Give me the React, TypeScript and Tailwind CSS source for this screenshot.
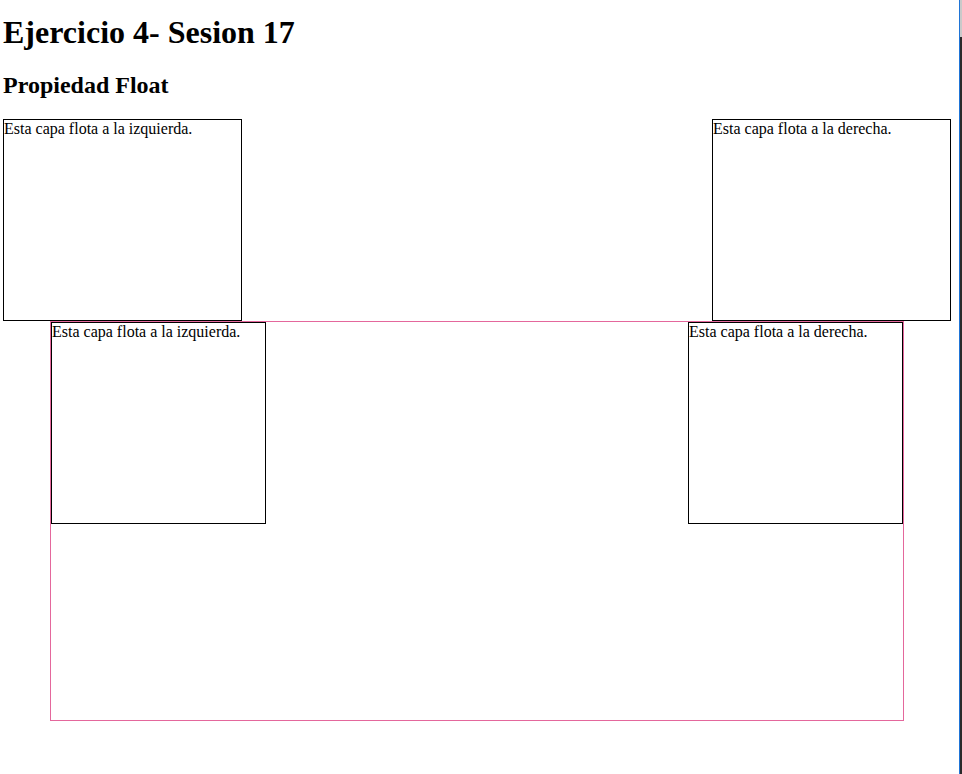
// Ejercicio 4 - Sesion 17: float demo
const serif = { fontFamily: '"Liberation Serif", "Times New Roman", serif' };

const Capa = ({ text, className }: { text: string; className: string }) => (
  <div className={`border border-black text-[16px] leading-[18px] ${className}`}>{text}</div>
);

const App = () => {
  return (
    <div className="flex min-h-[774px] w-[962px] bg-white text-black" style={serif}>
      {/* Page */}
      <div className="w-[959px] pl-[3px] pt-[14px]">
        <h1 className="text-[32px] font-bold leading-[37px]">Ejercicio 4- Sesion 17</h1>
        <h2 className="mt-[20px] mb-[20px] text-[24px] font-bold leading-[28px]">Propiedad Float</h2>

        {/* Top floats */}
        <div className="flex w-[948px] justify-between">
          <Capa text="Esta capa flota a la izquierda." className="h-[202px] w-[239px]" />
          <Capa text="Esta capa flota a la derecha." className="h-[202px] w-[239px]" />
        </div>

        {/* Pink container with floats inside */}
        <div className="ml-[47px] h-[400px] w-[854px] border border-[#e4679c]">
          <div className="flex justify-between">
            <Capa text="Esta capa flota a la izquierda." className="h-[202px] w-[215px]" />
            <Capa text="Esta capa flota a la derecha." className="h-[202px] w-[215px]" />
          </div>
        </div>
      </div>

      {/* Window edge */}
      <div className="w-px bg-[#1f74d6]" />
      <div className="flex w-[2px] flex-col">
        <div className="h-[37px] bg-[#c9c9c9]" />
        <div className="flex-1 bg-[#2a2a2a]" />
      </div>
    </div>
  );
};

export default App;
